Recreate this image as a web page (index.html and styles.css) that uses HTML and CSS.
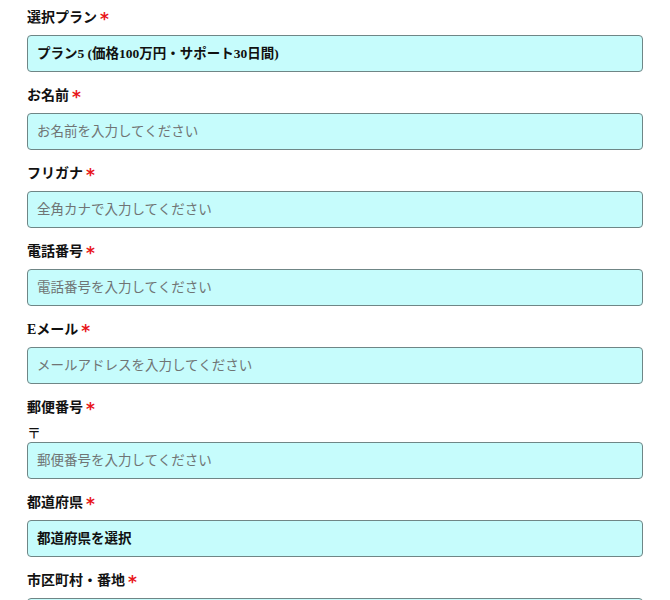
FILE: index.html
```html
<!DOCTYPE html>
<html lang="ja">
<head>
<meta charset="utf-8">
<link rel="stylesheet" href="styles.css">
</head>
<body>
<form class="form">
  <div class="field">
    <label class="label">選択プラン<span class="req">*</span></label>
    <select class="control select"><option>プラン5 (価格100万円・サポート30日間)</option></select>
  </div>
  <div class="field">
    <label class="label">お名前<span class="req">*</span></label>
    <input class="control" type="text" placeholder="お名前を入力してください">
  </div>
  <div class="field">
    <label class="label">フリガナ<span class="req">*</span></label>
    <input class="control" type="text" placeholder="全角カナで入力してください">
  </div>
  <div class="field">
    <label class="label">電話番号<span class="req">*</span></label>
    <input class="control" type="text" placeholder="電話番号を入力してください">
  </div>
  <div class="field">
    <label class="label">Eメール<span class="req">*</span></label>
    <input class="control" type="text" placeholder="メールアドレスを入力してください">
  </div>
  <div class="field">
    <label class="label">郵便番号<span class="req">*</span></label>
    <div class="postmark">〒</div>
    <input class="control" type="text" placeholder="郵便番号を入力してください">
  </div>
  <div class="field">
    <label class="label">都道府県<span class="req">*</span></label>
    <select class="control select"><option>都道府県を選択</option></select>
  </div>
  <div class="field">
    <label class="label">市区町村・番地<span class="req">*</span></label>
    <input class="control" type="text" placeholder="市区町村・番地を入力してください">
  </div>
</form>
</body>
</html>
```
FILE: styles.css
```css
html, body {
  margin: 0;
  padding: 0;
  background: #ffffff;
}
body {
  font-family: "Liberation Serif", "Noto Sans CJK JP", serif;
  color: #111;
}
.form {
  padding: 8px 27px 0 27px;
  display: flex;
  flex-direction: column;
  gap: 14px;
}
.field {
  display: flex;
  flex-direction: column;
}
.label {
  font-size: 14px;
  font-weight: bold;
  line-height: 20px;
  margin-bottom: 7px;
  display: flex;
  align-items: center;
}
.req {
  color: #e8161b;
  font-family: "DejaVu Sans", sans-serif;
  font-size: 17px;
  font-weight: bold;
  margin-left: 3px;
  line-height: 20px;
  position: relative;
  top: 1px;
}
.postmark {
  font-size: 14px;
  line-height: 17px;
}
.control {
  box-sizing: border-box;
  width: 100%;
  height: 37px;
  margin: 0;
  padding: 0 9px;
  border: 1px solid #6f8686;
  border-radius: 4px;
  background: #c6fcfc;
  font-family: "Liberation Serif", "Noto Sans CJK JP", serif;
  font-size: 13.5px;
  color: #111;
  outline: none;
}
.control::placeholder {
  color: #707474;
}
.select {
  appearance: none;
  -webkit-appearance: none;
  font-weight: bold;
}
```
